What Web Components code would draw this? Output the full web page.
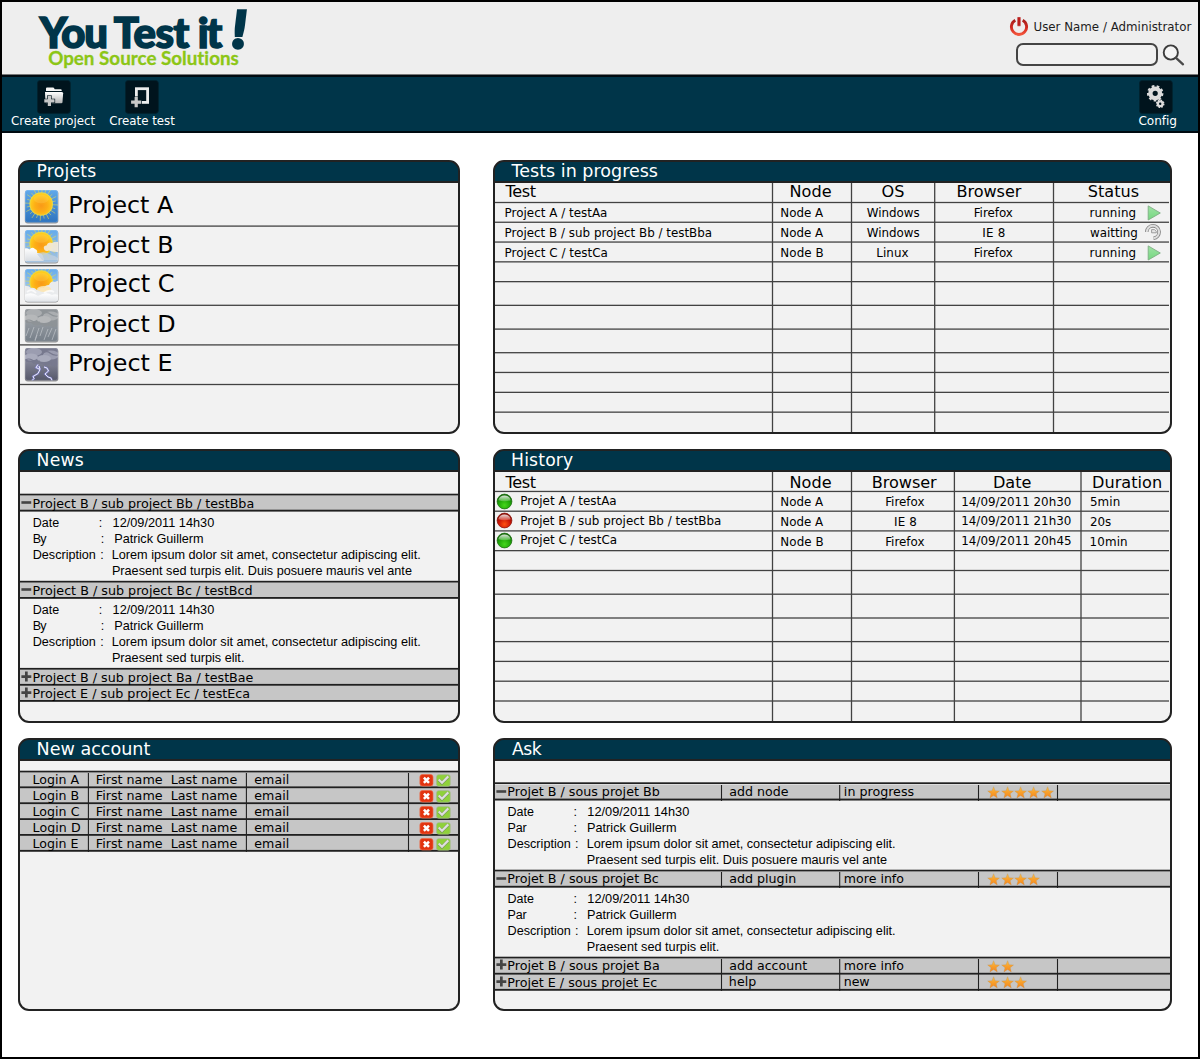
<!DOCTYPE html>
<html lang="en">
<head>
<meta charset="utf-8">
<title>You Test it!</title>
<style>
html,body{margin:0;padding:0;background:#fff}
body{font-family:"DejaVu Sans",sans-serif;color:#000}
</style>
</head>
<body>
<test-dashboard></test-dashboard>
<script>
const SANS = '"DejaVu Sans",sans-serif', ARIAL = '"Liberation Sans",sans-serif', BRAND = 'Lato,sans-serif';
const pen = document.createElement('canvas').getContext('2d');
const fragment = html => { const t = document.createElement('template'); t.innerHTML = html; return document.importNode(t.content, true); };

function define(name, css, html, setup) {
  const tpl = document.createElement('template');
  tpl.innerHTML = `<style>${css}</style>${html || '<slot></slot>'}`;
  customElements.define(name, class extends HTMLElement {
    constructor() {
      super();
      this.attachShadow({ mode: 'open' }).appendChild(tpl.content.cloneNode(true));
    }
    connectedCallback() { if (setup) setup(this, this.shadowRoot); }
  });
}

/* A line of text whose ink runs from `l` to `r` and sits on baseline `b` of its cell. */
define('ui-text', ':host{display:block;flex:none;white-space:pre}', '', el => {
  const a = n => el.getAttribute(n), text = el.textContent, n = [...text].length, target = a('r') - a('l') - .7;
  const family = a('f') || SANS, weight = a('wt') || '400', style = a('st') || 'normal';
  pen.font = `${style} ${weight} 200px ${family}`;
  const big = pen.measureText(text), bigInk = big.actualBoundingBoxLeft + big.actualBoundingBoxRight;
  let size = +a('s');
  const fit = 200 * target / bigInk;
  if (n >= 9 && Math.abs(fit / size - 1) < .08) size = +fit.toFixed(2);
  pen.font = `${style} ${weight} ${size}px ${family}`;
  const m = pen.measureText(text), asc = Math.round(m.fontBoundingBoxAscent), desc = Math.round(m.fontBoundingBoxDescent);
  const ink = m.width - (big.width - bigInk) * size / 200;
  const ls = n > 1 ? (target - ink) / (n - 1) : 0;
  Object.assign(el.style, {
    font: `${style} ${weight} ${size}px/${asc + desc}px ${family}`,
    letterSpacing: ls.toFixed(3) + 'px',
    marginLeft: (+a('l') + .5 + big.actualBoundingBoxLeft * size / 200).toFixed(2) + 'px',
    marginTop: (Math.round(+a('b')) - asc) + 'px',
    color: a('c') || 'inherit'
  });
  if (a('stroke')) el.style.webkitTextStroke = a('stroke') + 'px currentColor';
});
define('ui-row', ':host{display:flex;align-items:flex-start;flex:none;box-sizing:border-box}');
define('ui-cell', ':host{display:flex;align-items:flex-start;flex:none;height:100%;box-sizing:border-box}');
define('ui-stack', ':host{display:flex;flex-direction:column;flex:none}');
define('ui-panel', `:host{display:flex;flex-direction:column;box-sizing:border-box;border:2px solid #222;border-radius:11px;background:linear-gradient(#003549 19px,#f2f2f2 19px);overflow:hidden}
  header{display:flex;align-items:flex-start;height:21px;flex:none;box-sizing:border-box;background:#003549;border-bottom:2px solid #222;color:#fff}`,
  '<header><slot name="title"></slot></header><slot></slot>');
define('search-box', ':host{display:block;flex:none}input{display:block;box-sizing:border-box;width:142px;height:23px;border:2px solid #444;border-radius:7px;background:#f1f1f1;margin:0;padding:0 6px;outline:none}', '<input aria-label="Search">');
define('star-rating', ':host{display:flex;flex:none}svg{display:block;width:13.35px;height:13px;flex:none}', '<slot></slot>', (el, root) => {
  const n = +el.getAttribute('value');
  let html = '';
  for (let i = 0; i < n; i++) html += `<svg viewBox="0 0 13.35 13"><defs><linearGradient id="s${i}" x2="0" y2="1"><stop offset="0" stop-color="#f6c04e"/><stop offset=".5" stop-color="#f8a02c"/><stop offset="1" stop-color="#f5861f"/></linearGradient></defs><path d="M6.600 .7 8.200 4.700l4.300.3-3.300 2.700 1.100 4.200-3.700-2.300-3.700 2.300 1.100-4.200-3.300-2.700 4.300-.3z" fill="url(#s${i})" stroke="#b98a4c" stroke-opacity=".45" stroke-width=".6" stroke-linejoin="round"/></svg>`;
  root.appendChild(fragment(html));
});

const sky = (a, b) => `<linearGradient id="bg" x2="0" y2="1"><stop offset="0" stop-color="${a}"/><stop offset="1" stop-color="${b}"/></linearGradient>`;
const sunDefs = '<radialGradient id="sun" cx=".5" cy=".58" r=".52"><stop offset="0" stop-color="#f99a18"/><stop offset=".55" stop-color="#fdae16"/><stop offset="1" stop-color="#ffcb1d"/></radialGradient><filter id="bl" x="-20%" y="-20%" width="140%" height="140%"><feGaussianBlur stdDeviation=".55"/></filter><linearGradient id="cl" x2="0" y2="1"><stop offset="0" stop-color="#fff"/><stop offset="1" stop-color="#d9dde2"/></linearGradient><clipPath id="cp"><rect x="1" y="1" width="33" height="32.5" rx="2.5"/></clipPath>';
const rays = (x, y) => { let s = ''; for (let i = 0; i < 24; i++) { const t = i * Math.PI / 12 + .06, k = i % 2 ? 14.8 : 16.8; s += `M${x} ${y}L${(x + k * Math.cos(t)).toFixed(1)} ${(y + k * Math.sin(t)).toFixed(1)}`; } return `<path d="${s}" stroke="#e0d95a" stroke-width=".8" opacity=".75"/>`; };
const sun = (x, y) => rays(x, y) + `<circle cx="${x}" cy="${y}" r="11.8" fill="#e5d84a"/><circle cx="${x}" cy="${y}" r="10.8" fill="url(#sun)"/><ellipse cx="${x}" cy="${y - 5}" rx="7.5" ry="4.2" fill="#ffe27a" opacity=".2"/>`;
const tile = (defs, body) => `<svg width="35" height="36" viewBox="0 0 35 36"><defs>${defs}${sunDefs}</defs><rect x=".8" y="1.6" width="33.6" height="33" rx="3" fill="#555" opacity=".6" filter="url(#bl)"/><g clip-path="url(#cp)"><rect width="35" height="35" fill="url(#bg)"/>${body}</g><rect x="1.3" y="1.3" width="32.4" height="32" rx="2.3" fill="none" stroke="#fff" stroke-opacity=".22" stroke-width=".8"/></svg>`;
const darkClouds = (a, b, c) => `<g filter="url(#bl)"><path d="M0 0H35V17Q30 21 26 17.500Q21 20 17 16.500Q10 19 7 15Q3 16 0 13Z" fill="${b}"/><ellipse cx="10" cy="5" rx="8" ry="4" fill="${c}"/><ellipse cx="27" cy="8" rx="8" ry="4.500" fill="${c}"/><ellipse cx="20" cy="11.500" rx="7" ry="3.600" fill="${a}"/><ellipse cx="7" cy="10" rx="7" ry="3.500" fill="${a}"/><path d="M1 13Q5 11 8 13T16 14M18 7Q22 3 26 6T34 8M21 17Q25 14 28 17T34 16" fill="none" stroke="${b}" stroke-width="1.200"/></g>`;
const toolTile = inner => `<svg width="34" height="34" viewBox="0 0 34 34"><defs><linearGradient id="g" x2="0" y2="1"><stop offset="0" stop-color="#fff"/><stop offset="1" stop-color="#b4b4b4"/></linearGradient></defs><rect x=".4" y=".4" width="33" height="33" rx="3" fill="#00141d" stroke="#002330" stroke-width=".8"/>${inner}</svg>`;
const plusShape = (x, y) => `<path d="M${x - 1.6} ${y - 5.1}h3.2v3.500h3.500v3.200h-3.500v3.500h-3.200v-3.500h-3.500v-3.200h3.500z" fill="#c8c8c8" stroke="#00141d" stroke-width="1.300" paint-order="stroke"/>`;
const gear = (x, y, r, n, t, h) => { const c = 2 * Math.PI * r / n; return `<circle cx="${x}" cy="${y}" r="${r}" fill="none" stroke="#dcdcdc" stroke-width="${t}" stroke-dasharray="${(c * .54).toFixed(2)} ${(c * .46).toFixed(2)}"/><circle cx="${x}" cy="${y}" r="${(r + h) / 2}" fill="none" stroke="#dcdcdc" stroke-width="${r - h}"/>`; };
const ball = (dark, mid, lite) => `<svg width="17" height="17" viewBox="0 0 17 17"><defs><radialGradient id="b" cx=".5" cy=".75" r=".65"><stop offset="0" stop-color="${lite}"/><stop offset=".6" stop-color="${mid}"/><stop offset="1" stop-color="${dark}"/></radialGradient><linearGradient id="h" x2="0" y2="1"><stop offset="0" stop-color="#fff" stop-opacity=".85"/><stop offset="1" stop-color="#fff" stop-opacity=".2"/></linearGradient></defs><circle cx="8.500" cy="8.500" r="7.400" fill="url(#b)" stroke="${dark}" stroke-width=".7"/><path d="M2.300 7.300A6.400 6.400 0 0 1 14.700 7.300Q8.500 9.300 2.300 7.300Z" fill="url(#h)"/></svg>`;

const ICONS = {
  sunny: tile(sky('#62aaec', '#2c72bd'), sun(17.2, 15)),
  partly: tile(sky('#62aaec', '#a9c4dd'), sun(17.2, 14.5) + '<g filter="url(#bl)"><path d="M20 20Q19 16.500 22.500 16.500Q24 12.500 28 14Q32 11.500 36 14V23Q29 23 25 21.500Q21 23 20 20Z" fill="#f3ead9" opacity=".92"/><path d="M-1 20Q3 18.500 5.500 20.500Q8 17.500 11 20Q14 21 13 24Q19 24 19 28Q22 32 17 32H-1Z" fill="url(#cl)"/><path d="M13 25Q20 21 27 26Q33 27 35 31H18Z" fill="#c3d0dd" opacity=".75"/></g>'),
  cloudy: tile(sky('#62aaec', '#cfdbe6'), sun(17.2, 14) + '<g filter="url(#bl)"><path d="M-1 18Q4 17 7 20Q10 19 13 22Q17 19 20 20Q21 17 25 17Q27 12 31 14Q34 12 36 14V36H-1Z" fill="#e9ebed"/><ellipse cx="20" cy="21" rx="7" ry="3" fill="#fde5b0" opacity=".9"/><path d="M0 27Q8 23 14 28Q22 23 28 27Q32 25 36 28V36H0Z" fill="url(#cl)"/><path d="M3 24Q8 20 12 25M20 25Q25 21 30 24" fill="none" stroke="#fff" stroke-width="1.800" opacity=".7"/></g>'),
  rain: tile(sky('#a9adb1', '#747d87'), darkClouds('#b6b8ba', '#8e9397', '#abaeb1') + '<path d="M5 20l-3 8M10 19l-4 11M15 20l-4 12M19 19l-3 9M24 21l-4 11M28 20l-4 9M32 21l-4 11M13 27l-2 6" stroke="#d5d9dd" stroke-width=".8" opacity=".65"/>'),
  storm: tile(sky('#a3a5b7', '#535567'), darkClouds('#a9abbc', '#77798e', '#9b9db0') + '<path d="M14 17.500l-2 3 4 2-2 4-5 3 1 2-2 2M16 22l-1-3M20 20l3 1 1.500 3-3.500 3 3 3 3 1 1 2.500" fill="none" stroke="#8a8cf2" stroke-width="2" opacity=".6"/><path d="M14 17.500l-2 3 4 2-2 4-5 3 1 2-2 2M16 22l-1-3M20 20l3 1 1.500 3-3.500 3 3 3 3 1 1 2.500" fill="none" stroke="#f4f4ff" stroke-width=".9"/>'),
  folder: toolTile('<path d="M9 8.500q0-1 1-1h6q1 0 1.300 1l.4.8h6q1 0 1 1v.7H9z" fill="#f5f5f5"/><path d="M8 12h16.500q1.600 0 1.600 1.300l-.6 9q-.1 1-1.200 1H9.500q-1 0-1.100-1z" fill="url(#g)"/>' + plusShape(12.4, 20.9)),
  test: toolTile('<rect x="11.400" y="8.700" width="11.200" height="13.700" fill="none" stroke="#ececec" stroke-width="2.800"/>' + plusShape(11.200, 22.2)),
  gears: toolTile(gear(16.2, 13.3, 6.900, 9, 2.700, 2.600) + gear(21.2, 23.8, 3.500, 8, 1.600, 1.200)),
  power: '<svg width="20" height="21" viewBox="0 0 20 21"><defs><linearGradient id="p" x2="0" y2="1"><stop offset="0" stop-color="#a81f1c"/><stop offset=".55" stop-color="#d42a22"/><stop offset="1" stop-color="#f2553c"/></linearGradient></defs><g fill="none" stroke="url(#p)" stroke-width="2.900"><path d="M6.300 4.200A7.600 7.600 0 1 0 13.700 4.200"/></g><rect x="8.200" y=".9" width="3.600" height="9.300" rx=".7" fill="#bb1f1d" stroke="#eee" stroke-width=".4"/></svg>',
  lens: '<svg width="24" height="24" viewBox="0 0 24 24"><circle cx="9.800" cy="9.500" r="7.100" fill="#f4f4f4" stroke="#3c3c3c" stroke-width="1.900"/><path d="M15 14.800L22 21.300" stroke="#4a4a4a" stroke-width="2.300" stroke-linecap="round"/></svg>',
  play: '<svg width="15" height="16" viewBox="0 0 15 16"><defs><linearGradient id="p" x2="0" y2="1"><stop offset="0" stop-color="#a0e2a4"/><stop offset="1" stop-color="#74d880"/></linearGradient></defs><path d="M1.200 .9L13.300 8 1.200 15z" fill="url(#p)" stroke="#7fae83" stroke-width=".9" stroke-linejoin="round"/></svg>',
  wait: '<svg width="18" height="17" viewBox="0 0 18 17"><g fill="none"><path d="M2.700 8A6.200 6.200 0 1 1 9.500 14.200" stroke="#858585" stroke-width="3.600"/><path d="M2.700 8A6.200 6.200 0 1 1 9.500 14.200" stroke="#dedede" stroke-width="2"/><path d="M7.600 5.600v3.200h4.700v-1.400q-1.200-2.600-4.700-1.800z" fill="#e6e6e6" stroke="#949494" stroke-width=".9"/></g></svg>',
  green: ball('#146a08', '#1fa808', '#45d61c'),
  red: ball('#8a0d05', '#cc1505', '#ff5010'),
  minus: '<svg width="11" height="11" viewBox="0 0 11 11"><rect x=".4" y="4.200" width="9.800" height="2.600" fill="#444"/></svg>',
  plus: '<svg width="11" height="11" viewBox="0 0 11 11"><path d="M.4 4.200h3.600V.6h2.700v3.600h3.600v2.700H6.700v3.500H4V6.900H.4z" fill="#444"/></svg>',
  deny: '<svg width="15" height="13" viewBox="0 0 15 13"><rect x=".9" y=".5" width="13.100" height="11.500" rx="2.500" fill="#e23410" stroke="#ee6a48" stroke-width=".7"/><path d="M4.900 3.600L10 8.900M10 3.600L4.900 8.900" stroke="#fff" stroke-width="2.500"/></svg>',
  allow: '<svg width="15" height="13" viewBox="0 0 15 13"><rect x=".6" y=".7" width="13.600" height="11.500" rx="2" fill="#8fd13a" stroke="#a2b98a" stroke-width=".7"/><path d="M2.700 5.800L6 9 12.300 2.700" fill="none" stroke="#7d9a5c" stroke-width="3.200"/><path d="M2.700 5.500L6 8.700 12.300 2.400" fill="none" stroke="#dedede" stroke-width="2.200"/></svg>'
};
define('ui-icon', ':host{display:block;flex:none}svg{display:block}', '<slot></slot>', (el, root) => root.appendChild(fragment(ICONS[el.getAttribute('name')])));

/* Soft rules: a line centred on a fractional position is spread over the last pixels of its box. */
const lineEnd = (c, t) => Math.ceil(c + t / 2 - .001);
function rule(c, t, rgb, dir) {
  const end = lineEnd(c, t), stops = [];
  for (let i = 0; i < 3; i++) {
    const hi = end - i, cov = Math.max(0, Math.min(hi, c + t / 2) - Math.max(hi - 1, c - t / 2));
    stops.push(`rgba(${rgb},${cov.toFixed(2)}) ${i}px ${i + 1}px`);
  }
  return `linear-gradient(to ${dir},${stops.join(',')},transparent 3px)`;
}
const text = (x, y, [t, l, r, b, s, o = {}]) => `<ui-text l="${l - x}" r="${r - x}" b="${b - y}" s="${s}"${Object.entries(o).map(([k, v]) => ` ${k}='${v}'`).join('')}>${t}</ui-text>`;
const icon = (x, y, name, ix, iy) => `<ui-icon name="${name}" style="margin:${(iy - y).toFixed(1)}px 0 0 ${(ix - x).toFixed(1)}px"></ui-icon>`;
/* cells: {to, v, text:[...], icon:[name,x,y], stars:[n,x,y], html} */
function row(x0, x1, y0, y1, cells, opt = {}) {
  let x = x0, out = '';
  for (const c of cells) {
    const end = c.v ? lineEnd(c.v, opt.vt || 1.3) : c.to;
    const bg = c.v ? `background:${rule(c.v, opt.vt || 1.3, opt.rgb || '66,66,66', 'left')};` : '';
    let inner = '';
    if (c.text) inner = text(x, y0, c.text);
    if (c.icon) inner = icon(x, y0, ...c.icon);
    if (c.stars) inner = `<star-rating value="${c.stars[0]}" style="margin:${(c.stars[2] - y0).toFixed(1)}px 0 0 ${c.stars[1] - x}px"></star-rating>`;
    if (c.html) inner = c.html(x, y0);
    out += `<ui-cell style="${bg}width:${end - x}px">${inner}</ui-cell>`;
    x = end;
  }
  const bg = (opt.line ? rule(opt.line, opt.t || 1.3, opt.rgb || '66,66,66', 'top') + ' ' : '') + (opt.fill || '');
  return `<ui-row style="width:${x1 - x0}px;height:${y1 - y0}px;${bg.trim() ? `background:${bg}` : ''}">${out}</ui-row>`;
}
const panel = (x, y, h, title, l, r, b, body) => `<ui-panel style="height:${h}px">${text(x + 2, y + 2, [title, l, r, b, 17.2]).replace('<ui-text', '<ui-text slot="title"')}${body}</ui-panel>`;

/* Projects */
function projects() {
  const lines = [226.1, 265.7, 305.3, 344.9, 384.5], kinds = ['sunny', 'partly', 'cloudy', 'rain', 'storm'];
  const right = [173.3, 172.3, 173.5, 174.6, 171.3];
  let y = 183, out = '';
  lines.forEach((c, i) => {
    const e = lineEnd(c, 1.3);
    out += row(20, 458, y, e, [
      { to: 62, icon: [kinds[i], 23.6, 189 + i * 39.5] },
      { to: 458, text: ['Project ' + 'ABCDE'[i], 70, right[i], [213, 253, 292, 332, 371][i], 23.6] }], { line: c });
    y = e;
  });
  return out;
}

/* Run and history tables */
function table(y0, bottom, lines, vs, rows) {
  let y = y0, out = '';
  [...lines, null].forEach((c, i) => {
    const e = c ? lineEnd(c, 1.3) : bottom, data = rows[i] || [];
    let cells = vs.map((v, k) => ({ v, text: data[k] }));
    if (data.ball) cells = [{ to: 516, icon: data.ball }, ...cells];
    cells.push({ to: 1143, text: data[vs.length] });
    if (data.state) cells.push({ to: 1169, icon: data.state });
    if (data.wide) cells.splice(-1, 1, { to: 1169, text: data[vs.length] });
    out += row(495, 1169, y, e, cells, { line: c });
    y = e;
  });
  return out;
}
const H = 16.1;
function runs() {
  const S = 11.9, W = ['Windows', 866.7, 919.3], F = ['Firefox', 974.3, 1012.7], R = ['running', 1090, 1135.3];
  const mk = (b, name, r, node, os, br, st, state) => Object.assign([[name, 505.2, r, b, S], [node, 781, 823.2, b, S], [...os, b, S], [...br, b, S], [...st, b, S]], { state });
  return table(183, 432, [202.5, 222.25, 242.05, 261.85, 281.65, 305.35, 329.1, 352.7, 372.45, 392.35, 412.15], [772.5, 851.5, 934.7, 1053.5], [
    [['Test', 504.800, 536, 197, H], ['Node', 790.5, 831, 197, H], ['OS', 882, 903.8, 197, H], ['Browser', 957.5, 1021.7, 197, H], ['Status', 1088.3, 1138.5, 197, H]],
    mk(217, 'Project A / testAa', 606.5, 'Node A', W, F, R, ['play', 1146.800, 205]),
    mk(237, 'Project B / sub project Bb / testBba', 711.3, 'Node A', W, ['IE 8', 983, 1004.800], ['waitting', 1090, 1137], ['wait', 1144.200, 224.300]),
    mk(257, 'Project C / testCa', 607, 'Node B', ['Linux', 877, 908.3], F, R, ['play', 1146.800, 244.600])]);
}
function history() {
  const S = 11.9;
  const mk = (b, b1, bd, ball, name, r, node, br, date, dur) => Object.assign([[name, 521, r, b1, S], [node, 781, 823.2, b, S], [...br, b, S], [date, 962, 1070.700, bd, S], [...dur, b, S]], { ball, wide: true });
  return table(472, 721, [491.45, 511.2, 530.9, 550.65, 570.5, 594.2, 618, 641.6, 661.4, 681.2, 701], [772.5, 851.5, 954.4, 1081], [
    Object.assign([['Test', 504.800, 536, 488, H], ['Node', 790.5, 831, 488, H], ['Browser', 872.800, 937, 488, H], ['Date', 994, 1030.800, 488, H], ['Duration', 1093, 1161, 488, H]], { wide: true }),
    mk(506, 505, 506, ['green', 496.300, 492.600], 'Projet A / testAa', 615.800, 'Node A', ['Firefox', 885.800, 924.300], '14/09/2011 20h30', ['5min', 1090.300, 1119.400]),
    mk(526, 525, 525, ['red', 496.300, 512.300], 'Projet B / sub project Bb / testBba', 720.500, 'Node A', ['IE 8', 894.700, 916.200], '14/09/2011 21h30', ['20s', 1090.300, 1110.800]),
    mk(546, 544, 545, ['green', 496.300, 531.900], 'Projet C / testCa', 616.200, 'Node B', ['Firefox', 885.800, 924.300], '14/09/2011 20h45', ['10min', 1090.300, 1126.800])]);
}

/* Foldable lists */
const BAR = { rgb: '32,32,32', t: 1.8, vt: 1.1, fill: '#c6c6c6' };
function details(x0, x1, y0, y1, line, items) {
  const step = items.map(i => Math.round(i.b));
  let y = y0, out = '';
  items.forEach((it, i) => {
    const last = i === items.length - 1, e = last ? y1 : step[i] + 4, s = 12.5;
    const o = { f: ARIAL }, c = [];
    c.push({ to: x0 + 78, text: it.label && [it.label, it.ll, it.lr, step[i], s, o] });
    c.push({ to: x0 + 90, text: it.label && [':', it.colon, it.colon + 1.2, step[i], s, o] });
    c.push({ to: x1, text: [it.value, it.vl, it.vr, step[i], s, o] });
    out += row(x0, x1, y, e, c, last ? { line, rgb: BAR.rgb, t: BAR.t } : {});
    y = e;
  });
  return out;
}
function news() {
  const ln = [494.6, 510.600, 581.7, 597.900, 668.8, 684.8, 700.9], E = ln.map(c => lineEnd(c, 1.8));
  const bar = (i, name, r, b, ic, iy) => row(20, 458, E[i], E[i + 1], [{ to: 31, icon: [ic, 20.6, iy] }, { to: 458, text: [name, 33.3, r, b, 12.6] }], { ...BAR, line: ln[i + 1] });
  const det = (i, b, txt, r) => details(20, 458, E[i], E[i + 1], ln[i + 1], [
    { b: b[0], label: 'Date', ll: 33.2, lr: 59, colon: 99.300, value: '12/09/2011 14h30', vl: 113, vr: 214 },
    { b: b[1], label: 'By', ll: 33.2, lr: 46.700, colon: 101.400, value: 'Patrick Guillerm', vl: 114.8, vr: 203 },
    { b: b[2], label: 'Description', ll: 33.2, lr: 95.300, colon: 100.9, value: 'Lorem ipsum dolor sit amet, consectetur adipiscing elit.', vl: 112.2, vr: 419.800 },
    { b: b[3], value: txt, vl: 112.4, vr: r }]);
  return row(20, 458, 472, E[0], [], { line: ln[0], rgb: BAR.rgb, t: 1.8 })
    + bar(0, 'Project B / sub project Bb / testBba', 253.3, 508, 'minus', 497)
    + det(1, [527, 543, 559, 575], 'Praesent sed turpis elit. Duis posuere mauris vel ante', 411.6)
    + bar(2, 'Project B / sub project Bc / testBcd', 251.7, 595, 'minus', 584)
    + det(3, [614, 630, 646, 662], 'Praesent sed turpis elit.', 243.5)
    + bar(4, 'Project B / sub project Ba / testBae', 253, 682, 'plus', 671)
    + bar(5, 'Project E / sub project Ec / testEca', 249.2, 698, 'plus', 687);
}
function accounts() {
  const ln = [771.6, 787.3, 803.2, 819.1, 834.9, 850.8], E = ln.map(c => lineEnd(c, 1.8));
  const base = [784, 800, 816, 832, 848], r = [79.2, 78.6, 79, 80.2, 78];
  return row(20, 458, 761, E[0], [], { line: ln[0], rgb: BAR.rgb, t: 1.8 }) + base.map((b, i) => row(20, 458, E[i], E[i + 1], [
    { v: 88.4, text: ['Login ' + 'ABCDE'[i], 33.2, r[i], b, 12.6] },
    { v: 246.4, text: ['First name  Last name', 96.5, 236.800, b, 12.6] },
    { v: 408.5, text: ['email', 254.5, 288.3, b, 12.6] },
    { to: 435, icon: ['deny', 418.5, b - 10.3] },
    { to: 458, icon: ['allow', 436, b - 10.5] }], { ...BAR, line: ln[i + 1] })).join('');
}
function ask() {
  const ln = [783.2, 799.5, 870.6, 886.7, 957.6, 973.7, 989.8], E = ln.map(c => lineEnd(c, 1.8));
  const bar = (i, name, r, b, act, ar, b2, st, sr, n, sy, ic, iy) => row(495, 1170, E[i], E[i + 1], [
    { to: 506, icon: [ic, 495.5, iy] },
    { v: 721.5, text: [name, 508, r, b, 12.6] },
    { v: 839.7, text: [act, 729.5, ar, b2, 12.6] },
    { v: 978.5, text: [st, 844.5, sr, b2, 12.6] },
    { v: 1057.5, stars: [n, 987.3, sy] }, { to: 1170 }], { ...BAR, line: ln[i + 1] });
  const det = (i, b, txt, r) => details(495, 1170, E[i], E[i + 1], ln[i + 1], [
    { b: b[0], label: 'Date', ll: 508, lr: 533.7, colon: 574.1, value: '12/09/2011 14h30', vl: 587.8, vr: 689 },
    { b: b[1], label: 'Par', ll: 508, lr: 526.7, colon: 574.1, value: 'Patrick Guillerm', vl: 587.6, vr: 676 },
    { b: b[2], label: 'Description', ll: 508, lr: 570.3, colon: 575.6, value: 'Lorem ipsum dolor sit amet, consectetur adipiscing elit.', vl: 587.2, vr: 894.7 },
    { b: b[3], value: txt, vl: 587.2, vr: r }]);
  return row(495, 1170, 761, E[0], [], { line: ln[0], rgb: BAR.rgb, t: 1.8 })
    + bar(0, 'Projet B / sous projet Bb', 659.3, 796, 'add node', 788, 796, 'in progress', 913.7, 5, 785.8, 'minus', 785.7)
    + det(1, [816, 832, 848, 864], 'Praesent sed turpis elit. Duis posuere mauris vel ante', 886.6)
    + bar(2, 'Projet B / sous projet Bc', 658.3, 883, 'add plugin', 795.300, 883, 'more info', 903.5, 4, 873, 'minus', 872.600)
    + det(3, [903, 919, 935, 951], 'Praesent sed turpis elit.', 718.5)
    + bar(4, 'Projet B / sous projet Ba', 658.8, 970, 'add account', 807, 970, 'more info', 903.5, 2, 960, 'plus', 959.3)
    + bar(5, 'Projet E / sous projet Ec', 656.8, 987, 'help', 755.8, 986, 'new', 869.3, 3, 976.300, 'plus', 975.5);
}

/* Top of the page */
function banner() {
  const B = { f: BRAND, wt: 900, c: '#003549', stroke: 1.6 };
  const logo = `<ui-stack>${row(2, 990, 2, 52, [
    { to: 110, text: ['You', 38.9, 105.8, 48, 41.8, B] },
    { to: 194, text: ['Test', 113.8, 189.300, 48, 41.8, B] },
    { to: 227, text: ['it', 199, 222.300, 48, 41.8, B] },
    { to: 260, text: ['!', 233, 246.5, 48, 52, { ...B, st: 'italic', stroke: 3.4 }] }])}${row(2, 990, 52, 74, [
    { to: 260, text: ['Open Source Solutions', 48.3, 238.800, 65, 18.8, { f: BRAND, wt: 700, c: '#8cc616', stroke: .3 }] }])}</ui-stack>`;
  const user = `<ui-stack>${row(990, 1198, 2, 40, [
    { to: 1030, icon: ['power', 1008.700, 15.5] },
    { to: 1198, text: ['User Name / Administrator', 1034, 1191.6, 31, 12.1, { c: '#1c1c1c' }] }])}${row(990, 1198, 40, 74, [
    { to: 1159, html: () => '<search-box style="margin:3px 0 0 26px"></search-box>' },
    { to: 1198, icon: ['lens', 1160.700, 43] }])}</ui-stack>`;
  return logo + user;
}
function toolbar() {
  const tool = (x0, x1, name, ix, label, l, r) => ({ to: x1, html: () => `<ui-stack>${row(x0, x1, 77, 114, [{ to: x1, icon: [name, ix, 80] }])}${row(x0, x1, 114, 131, [{ to: x1, text: [label, l, r, 125, 12.1, { c: '#fff' }] }])}</ui-stack>` });
  return row(2, 1198, 77, 131, [
    tool(2, 102, 'folder', 36.500, 'Create project', 11.2, 95),
    tool(102, 182, 'test', 125.300, 'Create test', 109.4, 174.800),
    { to: 1130 },
    tool(1130, 1198, 'gears', 1139.200, 'Config', 1138.7, 1176)]);
}

define('test-dashboard', `
  :host{display:flex;flex-direction:column;box-sizing:border-box;width:1200px;height:1059px;border:2px solid #000;background:#fff;overflow:hidden}
  header{display:flex;height:73px;flex:none;box-sizing:border-box;background:#eee;border-bottom:1px solid #777}
  nav{height:58px;flex:none;box-sizing:border-box;background:#003549;border-top:2px solid #000a10;border-bottom:2px solid #000a10}
  main{display:flex;gap:33px;padding:27px 0 0 16px}
  section{display:flex;flex-direction:column;gap:15px}
  .left{width:442px}.right{width:679px}`,
  '<header></header><nav></nav><main><section class="left"></section><section class="right"></section></main>', (el, root) => {
  const q = s => root.querySelector(s);
  q('header').innerHTML = banner();
  q('nav').innerHTML = toolbar();
  q('.left').innerHTML = panel(18, 160, 274, 'Projets', 37.700, 95.500, 177, projects())
    + panel(18, 449, 274, 'News', 37.700, 83.2, 466, news())
    + panel(18, 738, 273, 'New account', 37.700, 150.2, 755, accounts());
  q('.right').innerHTML = panel(493, 160, 274, 'Tests in progress', 511, 657.4, 177, runs())
    + panel(493, 449, 274, 'History', 512.2, 573, 466, history())
    + panel(493, 738, 273, 'Ask', 511.500, 542, 755, ask());
});
</script>
</body>
</html>
